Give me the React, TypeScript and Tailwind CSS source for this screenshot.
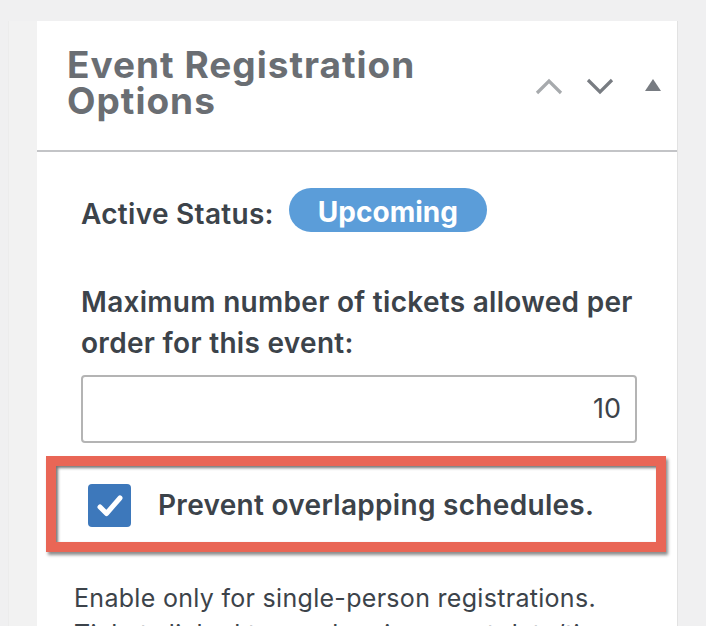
import React from "react";

function ChevronUp({ className }: { className?: string }) {
  return (
    <svg width="28" height="17" viewBox="0 0 28 17" className={className}>
      <polyline points="2,15 14,3 26,15" fill="none" stroke="currentColor" strokeWidth="3.2" />
    </svg>
  );
}

function ChevronDown({ className }: { className?: string }) {
  return (
    <svg width="28" height="17" viewBox="0 0 28 17" className={className}>
      <polyline points="2,2 14,14 26,2" fill="none" stroke="currentColor" strokeWidth="3.2" />
    </svg>
  );
}

export default function App() {
  return (
    <div
      className="w-[706px] h-[626px] bg-[#f0f0f1] overflow-hidden flex flex-col"
      style={{ fontFamily: "Inter, 'Noto Sans', sans-serif" }}
    >
      <div className="h-[21px] shrink-0" />
      <div className="flex flex-1 min-h-0">
        <div className="w-[8px] shrink-0" />
        <div className="w-[29px] shrink-0 bg-[#f2f2f2] border-l border-[#ececec]" />

        {/* panel */}
        <div className="w-[640px] shrink-0 bg-white flex flex-col">
          <div className="h-[129px] shrink-0 flex border-b-2 border-[#c3c4c7] box-content">
            <h2 className="pl-[30px] pt-[26px] text-[37px] leading-[36px] font-bold text-[#6a6e73] tracking-[1px]">
              Event Registration
              <br />
              Options
            </h2>
            <div className="ml-auto flex items-center gap-[23px] pr-[16px] pt-[2px]">
              <ChevronUp className="text-[#a7aaad]" />
              <ChevronDown className="text-[#787c82]" />
              <span className="block w-0 h-0 ml-[8px] border-l-[8px] border-r-[8px] border-b-[12px] border-l-transparent border-r-transparent border-b-[#787c82] mb-[4px]" />
            </div>
          </div>

          <div className="flex flex-col">
            <div className="flex items-start pl-[44px] pt-[36px]">
              <span className="mt-[4px] text-[28px] leading-[44px] font-semibold text-[#3c434a] tracking-[0.3px]">
                Active Status:
              </span>
              <span className="ml-[15px] h-[44px] px-[29px] pt-[5px] rounded-full bg-[#5b9dd9] text-white text-[28px] leading-[38px] font-bold">
                Upcoming
              </span>
            </div>

            <p className="pl-[44px] pr-[30px] mt-[46px] text-[28px] leading-[41px] font-semibold text-[#3c434a] tracking-[0.3px]">
              Maximum number of tickets allowed per order for this event:
            </p>

            <div className="ml-[44px] mr-[40px] mt-[11px] h-[68px] border-2 border-[#b4b4b4] rounded-[4px] flex items-center justify-end pr-[14px]">
              <span className="text-[27px] text-[#3c434a]">10</span>
            </div>

            <div className="ml-[9px] mr-[11px] mt-[13px] h-[96px] border-[10px] border-[#e96656] shadow-[2px_3px_3px_rgba(0,0,0,0.45),inset_2px_2px_3px_rgba(0,0,0,0.55)] flex items-start pl-[32px] pt-[18px]">
              <span className="w-[43px] h-[43px] rounded-[4px] bg-[#3d78bb] flex items-center justify-center">
                <svg width="30" height="26" viewBox="0 0 30 26">
                  <polyline
                    points="5,14 11.5,20.5 25,5"
                    fill="none"
                    stroke="white"
                    strokeWidth="5"
                    strokeLinecap="round"
                    strokeLinejoin="round"
                  />
                </svg>
              </span>
              <span className="ml-[27px] text-[28px] leading-[43px] font-semibold text-[#3c434a] tracking-[0.3px]">
                Prevent overlapping schedules.
              </span>
            </div>

            <p className="pl-[37px] pr-[30px] mt-[28px] text-[25px] leading-[36px] text-[#3c434a] tracking-[0.3px]">
              Enable only for single-person registrations. Tickets linked to overlapping event date/times
            </p>
          </div>
        </div>

        <div className="flex-1 border-l border-[#e2e2e2]" />
      </div>
    </div>
  );
}
